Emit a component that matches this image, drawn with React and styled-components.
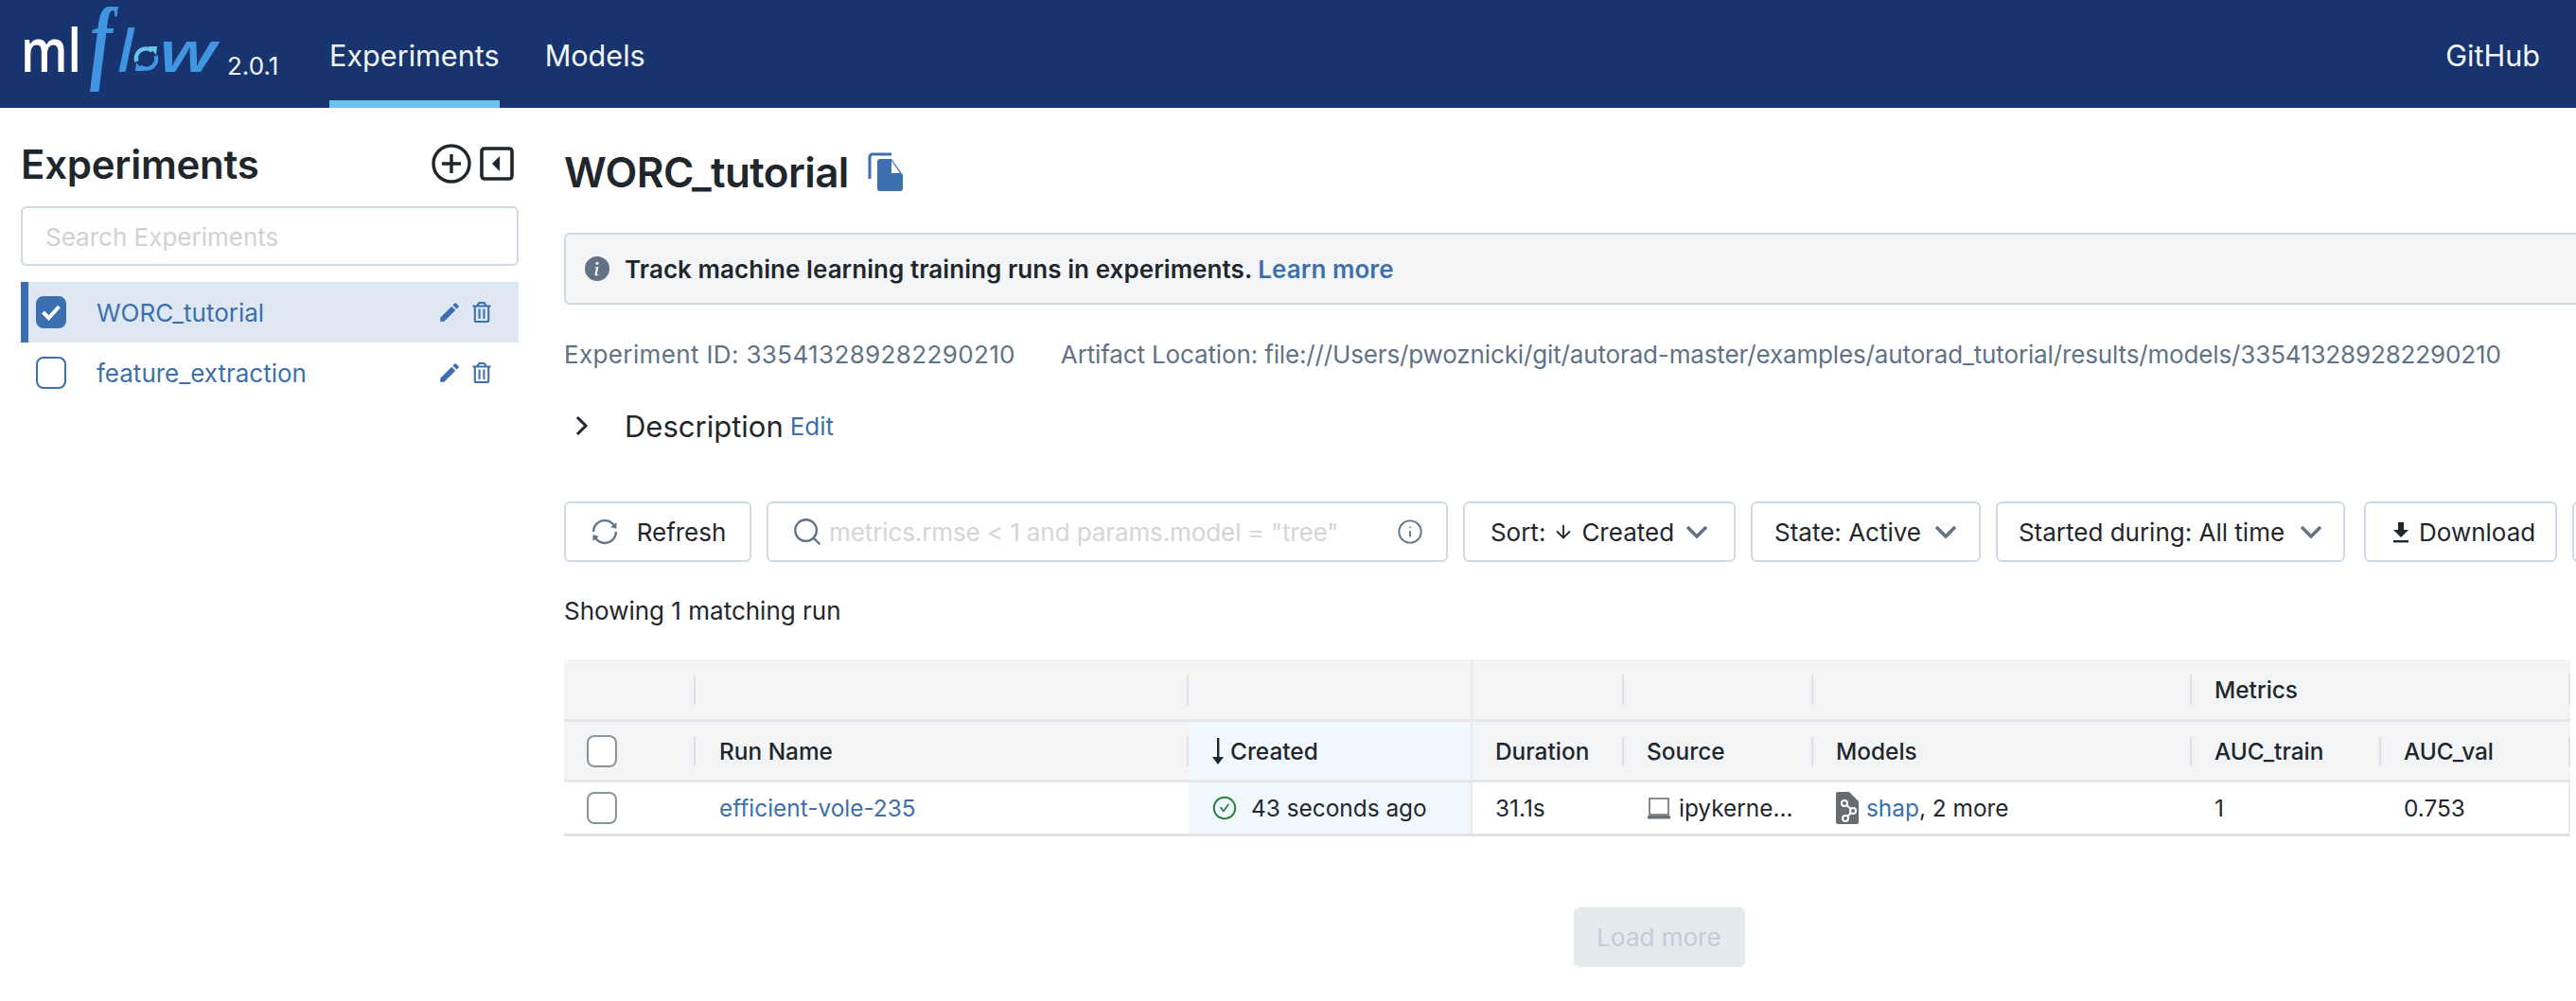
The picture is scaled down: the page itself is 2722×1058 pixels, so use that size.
import React from 'react'
import styled, { createGlobalStyle } from 'styled-components'
import { MdEdit } from 'react-icons/md'
import { FaRegTrashAlt } from 'react-icons/fa'
import { BsInfoCircleFill } from 'react-icons/bs'
import { AiOutlineSync, AiOutlineCheckCircle } from 'react-icons/ai'
import { Search, Info, ArrowDown } from 'lucide-react'

const GlobalStyle = createGlobalStyle`
  html, body {
    margin: 0;
    padding: 0;
    background: #fff;
    overflow: hidden;
  }
  body {
    font-family: Inter, "Noto Sans", sans-serif;
    color: #1f272d;
    font-size: 26px;
  }
  * { box-sizing: border-box; }
`

const Page = styled.div`
  width: 2722px;
  height: 1058px;
  display: flex;
  flex-direction: column;
  overflow: hidden;
`

const Header = styled.header`
  height: 114px;
  flex-shrink: 0;
  background: #18346f;
  display: flex;
  align-items: stretch;
  padding: 0 38px 0 20px;
`

const LogoWrap = styled.div`
  display: flex;
  align-items: center;
  width: 328px;
`

const Version = styled.span`
  color: #f2f6fb;
  font-size: 26px;
  margin: 24px 0 0 8px;
`

const Nav = styled.nav`
  display: flex;
  gap: 48px;
  flex: 1;
`

const NavItem = styled.div`
  color: #f2f6fb;
  font-size: 30.6px;
  height: 114px;
  display: flex;
  align-items: center;
  padding-top: 10px;
  border-bottom: 8px solid ${props => (props.$active ? '#6ac4ea' : 'transparent')};
`

const Body = styled.div`
  flex: 1;
  display: flex;
  min-height: 0;
`

const Sidebar = styled.aside`
  width: 596px;
  flex-shrink: 0;
  padding: 27px 48px 0 22px;
`

const SidebarHead = styled.div`
  height: 64px;
  display: flex;
  align-items: center;
  justify-content: space-between;
  padding-right: 5px;
`

const SidebarTitle = styled.h1`
  margin: 0;
  font-size: 42px;
  font-weight: 600;
  letter-spacing: -0.25px;
  color: #1f272d;
`

const HeadIcons = styled.div`
  display: flex;
  align-items: center;
  gap: 9px;
`

const SearchBox = styled.div`
  height: 63px;
  margin-top: 13px;
  border: 2px solid #ced9e6;
  border-radius: 6px;
  display: flex;
  align-items: center;
  padding: 2px 0 0 24px;
  color: #cfd2d5;
  font-size: 26px;
`

const ExperimentList = styled.div`
  margin-top: 17px;
`

const ExperimentRow = styled.div`
  height: 64px;
  display: flex;
  align-items: center;
  padding-left: ${props => (props.$selected ? '8px' : '16px')};
  background: ${props => (props.$selected ? '#dfe7f2' : '#fff')};
  border-left: ${props => (props.$selected ? '8px solid #3b6fb0' : 'none')};
  color: #3b6fb0;
`

const CheckBox = styled.div`
  width: 32px;
  height: 34px;
  border-radius: 8px;
  border: 2px solid ${props => props.$color || '#3b6fb0'};
  background: ${props => (props.$checked ? '#3b6fb0' : '#fff')};
  display: flex;
  align-items: center;
  justify-content: center;
  flex-shrink: 0;
`

const ExperimentName = styled.span`
  margin-left: 32px;
  flex: 1;
  font-size: 26px;
`

const RowIcons = styled.div`
  display: flex;
  align-items: center;
  gap: 10px;
  padding-right: 28px;
`

const Main = styled.main`
  flex: 1;
  min-width: 0;
  overflow: hidden;
`

const TitleRow = styled.div`
  margin-top: 36px;
  height: 64px;
  display: flex;
  align-items: center;
  gap: 20px;
`

const PageTitle = styled.h2`
  margin: 0;
  font-size: 44px;
  font-weight: 600;
  letter-spacing: -0.6px;
`

const Banner = styled.div`
  width: 2300px;
  height: 76px;
  margin-top: 32px;
  background: #f3f5f7;
  border: 2px solid #ced9e6;
  border-radius: 6px;
  display: flex;
  align-items: center;
  gap: 16px;
  padding-left: 20px;
  font-weight: 600;
  letter-spacing: 0.06px;
`

const Link = styled.span`
  color: #3b6fb0;
`

const MetaLine = styled.div`
  margin-top: 36px;
  height: 32px;
  display: flex;
  align-items: center;
  gap: 48px;
  color: #5f7286;
  white-space: nowrap;
`

const MetaItem = styled.span`
  letter-spacing: ${props => props.$spacing}px;
`

const DescriptionRow = styled.div`
  margin-top: 40px;
  height: 40px;
  display: flex;
  align-items: center;
  padding-left: 7px;
`

const DescriptionLabel = styled.span`
  font-size: 31px;
  margin-left: 33px;
  margin-right: 7px;
`

const Toolbar = styled.div`
  margin-top: 60px;
  display: flex;
  gap: 16px;
  white-space: nowrap;
`

const ToolButton = styled.div`
  height: 64px;
  width: ${props => props.$width}px;
  margin-right: ${props => props.$after || 0}px;
  flex-shrink: 0;
  border: 2px solid #ced9e6;
  border-radius: 6px;
  display: flex;
  align-items: center;
  justify-content: center;
  gap: ${props => props.$gap || 12}px;
  background: #fff;
`

const DownloadButton = styled(ToolButton)`
  justify-content: flex-start;
  padding-left: 28px;
`

const SortDirection = styled(ArrowDown)`
  margin: 0 -4px;
`

const RunSearch = styled(ToolButton)`
  padding: 0 24px;
  justify-content: flex-start;
  color: #d3d5d8;
`

const SearchText = styled.span`
  flex: 1;
  letter-spacing: -0.1px;
`

const Showing = styled.div`
  margin-top: 36px;
  height: 32px;
  line-height: 32px;
`

const Table = styled.div`
  margin-top: 35px;
  width: 2120px;
  display: grid;
  grid-template-columns: 139px 521px 300px 160px 200px 400px 200px 200px;
  grid-template-rows: 66px 64px 54px;
  font-size: 24.4px;
  border-bottom: 3px solid #e0e2e5;
`

const HeadCell = styled.div`
  position: relative;
  background: ${props => (props.$sorted ? '#f0f7fd' : '#f3f4f6')};
  border-bottom: 3px solid #e4e6e9;
  display: flex;
  align-items: center;
  padding-left: ${props => props.$pad ?? 24}px;
  font-weight: 500;
  gap: 6px;

  &::after {
    content: '';
    display: ${props => (props.$noDivider ? 'none' : 'block')};
    position: absolute;
    right: 0;
    top: 50%;
    height: ${props => (props.$full ? '100%' : '32px')};
    transform: translateY(-50%);
    width: 2px;
    background: ${props => (props.$full ? '#e8eaec' : '#dfe1e4')};
  }
`

const BodyCell = styled.div`
  background: ${props => (props.$sorted ? '#f0f7fd' : '#fff')};
  border-right: ${props => (props.$edge ? '2px solid #e8eaec' : 'none')};
  display: flex;
  align-items: center;
  padding-left: ${props => props.$pad ?? 24}px;
  gap: ${props => props.$gap ?? 8}px;
  white-space: nowrap;
`

const LoadMoreRow = styled.div`
  width: 2314px;
  margin-top: 75px;
  display: flex;
  justify-content: center;
`

const LoadMore = styled.div`
  width: 181px;
  height: 63px;
  border-radius: 6px;
  background: #e4ebef;
  color: #c2cbd8;
  display: flex;
  align-items: center;
  justify-content: center;
`

const Chevron = ({ color = '#5f7286', size = 24, dir = 'down' }) => (
  <svg width={size} height={size} viewBox="0 0 24 24" fill="none">
    {dir === 'down' ? (
      <path d="M2 7l10 10 10-10" stroke={color} strokeWidth="3.4" />
    ) : (
      <path d="M7 3l9 9-9 9" stroke={color} strokeWidth="3" />
    )}
  </svg>
)

const Logo = () => (
  <svg width="212" height="100" viewBox="0 0 212 100">
    <text
      x="2"
      y="69"
      fontFamily="Open Sans"
      fontWeight="600"
      fontSize="64"
      fill="#fff"
      textLength="64"
      lengthAdjust="spacingAndGlyphs"
    >
      ml
    </text>
    <text
      transform="translate(75,69) scale(0.72,1)"
      fontFamily="Liberation Serif"
      fontStyle="italic"
      fontWeight="bold"
      fontSize="100"
      fill="#3f95e0"
    >
      f
    </text>
    <text x="104" y="69" fontFamily="Open Sans" fontStyle="italic" fontWeight="600" fontSize="62" fill="#3f95e0">
      l
    </text>
    <path d="M124.3 58A10.5 10.5 0 0 1 141 46.8" fill="none" stroke="#6ac4ea" strokeWidth="4.5" />
    <path d="M144.7 52A10.5 10.5 0 0 1 128 63.2" fill="none" stroke="#3f95e0" strokeWidth="4.5" />
    <path d="M137 42h9l-1 9z" fill="#6ac4ea" />
    <path d="M132 68h-9l1-9z" fill="#3f95e0" />
    <text
      x="148"
      y="69"
      fontFamily="Open Sans"
      fontStyle="italic"
      fontWeight="600"
      fontSize="60"
      fill="#3f95e0"
      textLength="61"
      lengthAdjust="spacingAndGlyphs"
    >
      w
    </text>
  </svg>
)

const PlusCircle = () => (
  <svg width="42" height="42" viewBox="0 0 42 42" fill="none" stroke="#1f272d">
    <circle cx="21" cy="21" r="19" strokeWidth="3.4" />
    <path d="M21 11v20M11 21h20" strokeWidth="3.4" />
  </svg>
)

const CollapseIcon = () => (
  <svg width="36" height="36" viewBox="0 0 36 36">
    <rect x="2" y="2" width="32" height="32" rx="3" fill="none" stroke="#1f272d" strokeWidth="3.6" />
    <path d="M21 10v16l-8-8z" fill="#1f272d" />
  </svg>
)

const CopyIcon = () => (
  <svg width="38" height="42" viewBox="0 0 38 42">
    <path d="M2 28V5a3 3 0 0 1 3-3h20" fill="none" stroke="#3b6fb0" strokeWidth="3" />
    <path d="M10 10a3 3 0 0 1 3-3h12l12 17v14a3 3 0 0 1-3 3H13a3 3 0 0 1-3-3z" fill="#3b6fb0" />
    <path d="M25 9v13h9z" fill="#fff" />
  </svg>
)

const DownloadIcon = () => (
  <svg width="18" height="24" viewBox="0 0 18 24" fill="#1f272d">
    <path d="M6 2h6v8h5l-8 8-8-8h5z" />
    <rect x="1" y="21" width="16" height="2.4" />
  </svg>
)

const LaptopIcon = () => (
  <svg width="26" height="26" viewBox="0 0 26 26">
    <rect x="3" y="3" width="20" height="17" fill="none" stroke="#6a6f74" strokeWidth="1.6" />
    <rect x="1" y="21" width="24" height="3.4" rx="1" fill="#6a6f74" />
  </svg>
)

const ModelIcon = () => (
  <svg width="24" height="34" viewBox="0 0 24 34">
    <path d="M2 0h12l10 10v22a2 2 0 0 1-2 2H2a2 2 0 0 1-2-2V2a2 2 0 0 1 2-2z" fill="#666c72" />
    <g fill="none" stroke="#fff" strokeWidth="2">
      <circle cx="9" cy="12" r="3" />
      <circle cx="18" cy="20" r="3" />
      <circle cx="10" cy="28" r="3" />
      <path d="M11 14l5 4M16 22l-4 4" />
    </g>
  </svg>
)

const SortArrow = () => (
  <svg width="14" height="30" viewBox="0 0 14 30" fill="#1f272d">
    <rect x="6" y="1" width="2.4" height="22" />
    <path d="M1 21h12l-6 8z" />
  </svg>
)

const experiments = [
  { name: 'WORC_tutorial', selected: true },
  { name: 'feature_extraction', selected: false }
]

export default function App() {
  const ExperimentRows = experiments.map(item => (
    <ExperimentRow key={item.name} $selected={item.selected}>
      <CheckBox $checked={item.selected}>
        {item.selected && (
          <svg width="22" height="18" viewBox="0 0 22 18" fill="none">
            <path d="M2.5 9l6 6L19.5 3" stroke="#fff" strokeWidth="4" />
          </svg>
        )}
      </CheckBox>
      <ExperimentName>{item.name}</ExperimentName>
      <RowIcons>
        <MdEdit size={26} color="#3b6fb0" />
        <FaRegTrashAlt size={22} color="#3b6fb0" />
      </RowIcons>
    </ExperimentRow>
  ))

  return (
    <Page>
      <GlobalStyle />
      <Header>
        <LogoWrap>
          <Logo />
          <Version>2.0.1</Version>
        </LogoWrap>
        <Nav>
          <NavItem $active>Experiments</NavItem>
          <NavItem>Models</NavItem>
        </Nav>
        <NavItem>GitHub</NavItem>
      </Header>
      <Body>
        <Sidebar>
          <SidebarHead>
            <SidebarTitle>Experiments</SidebarTitle>
            <HeadIcons>
              <PlusCircle />
              <CollapseIcon />
            </HeadIcons>
          </SidebarHead>
          <SearchBox>Search Experiments</SearchBox>
          <ExperimentList>{ExperimentRows}</ExperimentList>
        </Sidebar>
        <Main>
          <TitleRow>
            <PageTitle>WORC_tutorial</PageTitle>
            <CopyIcon />
          </TitleRow>
          <Banner>
            <BsInfoCircleFill size={26} color="#5f7286" />
            <span>
              Track machine learning training runs in experiments. <Link>Learn more</Link>
            </span>
          </Banner>
          <MetaLine>
            <MetaItem $spacing={0.36}>Experiment ID: 335413289282290210</MetaItem>
            <MetaItem $spacing={-0.14}>
              Artifact Location: file:///Users/pwoznicki/git/autorad-master/examples/autorad_tutorial/results/models/335413289282290210
            </MetaItem>
          </MetaLine>
          <DescriptionRow>
            <Chevron color="#1f272d" dir="right" />
            <DescriptionLabel>Description</DescriptionLabel>
            <Link>Edit</Link>
          </DescriptionRow>
          <Toolbar>
            <ToolButton $width={198} $gap={18}>
              <AiOutlineSync size={32} color="#5f7286" />
              Refresh
            </ToolButton>
            <RunSearch $width={720} $gap={6}>
              <Search size={34} color="#5f7286" strokeWidth={1.6} />
              <SearchText>metrics.rmse &lt; 1 and params.model = "tree"</SearchText>
              <Info size={28} color="#5f7286" strokeWidth={1.6} />
            </RunSearch>
            <ToolButton $width={288}>
              <span>Sort:</span>
              <SortDirection size={22} />
              <span>Created</span>
              <Chevron />
            </ToolButton>
            <ToolButton $width={243} $gap={14}>
              State: Active
              <Chevron />
            </ToolButton>
            <ToolButton $width={369} $after={4} $gap={16}>
              Started during: All time
              <Chevron />
            </ToolButton>
            <DownloadButton $width={204} $gap={10}>
              <DownloadIcon />
              Download
            </DownloadButton>
            <ToolButton $width={100} />
          </Toolbar>
          <Showing>Showing 1 matching run</Showing>
          <Table>
            <HeadCell />
            <HeadCell />
            <HeadCell $full />
            <HeadCell />
            <HeadCell />
            <HeadCell />
            <HeadCell $noDivider>Metrics</HeadCell>
            <HeadCell />

            <HeadCell>
              <CheckBox $color="#8a9599" />
            </HeadCell>
            <HeadCell $pad={25}>Run Name</HeadCell>
            <HeadCell $sorted $full>
              <SortArrow />
              Created
            </HeadCell>
            <HeadCell>Duration</HeadCell>
            <HeadCell>Source</HeadCell>
            <HeadCell>Models</HeadCell>
            <HeadCell>AUC_train</HeadCell>
            <HeadCell>AUC_val</HeadCell>

            <BodyCell>
              <CheckBox $color="#8a9599" />
            </BodyCell>
            <BodyCell $pad={25}>
              <Link>efficient-vole-235</Link>
            </BodyCell>
            <BodyCell $sorted $edge $gap={14}>
              <AiOutlineCheckCircle size={28} color="#2f7d3f" />
              43 seconds ago
            </BodyCell>
            <BodyCell>31.1s</BodyCell>
            <BodyCell>
              <LaptopIcon />
              ipykerne...
            </BodyCell>
            <BodyCell>
              <ModelIcon />
              <span>
                <Link>shap</Link>, 2 more
              </span>
            </BodyCell>
            <BodyCell>1</BodyCell>
            <BodyCell $edge>0.753</BodyCell>
          </Table>
          <LoadMoreRow>
            <LoadMore>Load more</LoadMore>
          </LoadMoreRow>
        </Main>
      </Body>
    </Page>
  )
}
